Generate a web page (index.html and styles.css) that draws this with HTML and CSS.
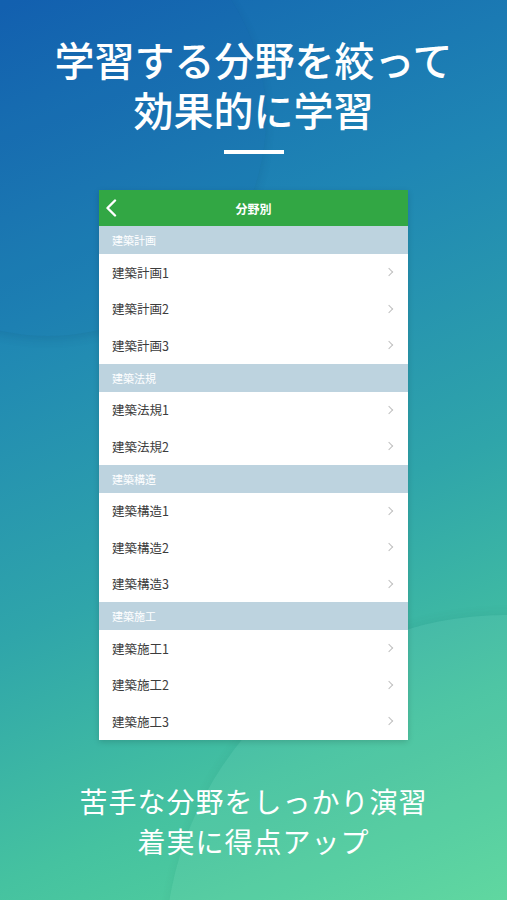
FILE: index.html
```html
<!DOCTYPE html>
<html lang="ja">
<head>
  <meta charset="utf-8">
  <title>分野別</title>
  <link rel="stylesheet" href="styles.css">
</head>
<body>
  <div class="screen">
    <div class="bubble bubble-top"></div>
    <div class="bubble bubble-bottom"></div>

    <h1 class="headline">学習する分野を絞って<br>効果的に学習</h1>
    <div class="rule"></div>

    <div class="phone">
      <div class="navbar">
        <svg class="back" width="12" height="18" viewBox="0 0 12 18">
          <path d="M10 1.5 L2.5 9 L10 16.5" fill="none" stroke="#fff" stroke-width="2.4" stroke-linecap="round" stroke-linejoin="round"/>
        </svg>
        <span class="nav-title">分野別</span>
      </div>

      <div class="section">建築計画</div>
      <div class="row"><span>建築計画1</span><i class="chev"></i></div>
      <div class="row"><span>建築計画2</span><i class="chev"></i></div>
      <div class="row"><span>建築計画3</span><i class="chev"></i></div>

      <div class="section">建築法規</div>
      <div class="row"><span>建築法規1</span><i class="chev"></i></div>
      <div class="row"><span>建築法規2</span><i class="chev"></i></div>

      <div class="section">建築構造</div>
      <div class="row"><span>建築構造1</span><i class="chev"></i></div>
      <div class="row"><span>建築構造2</span><i class="chev"></i></div>
      <div class="row"><span>建築構造3</span><i class="chev"></i></div>

      <div class="section">建築施工</div>
      <div class="row"><span>建築施工1</span><i class="chev"></i></div>
      <div class="row"><span>建築施工2</span><i class="chev"></i></div>
      <div class="row"><span>建築施工3</span><i class="chev"></i></div>
    </div>

    <p class="caption">苦手な分野をしっかり演習<br>着実に得点アップ</p>
  </div>
</body>
</html>
```

FILE: styles.css
```css
html, body {
  margin: 0;
  padding: 0;
}

body {
  font-family: "Noto Sans CJK JP", "Noto Sans", sans-serif;
}

.screen {
  position: relative;
  width: 507px;
  height: 900px;
  overflow: hidden;
  background: linear-gradient(158deg, #1363b1 0%, #1f86b4 30%, #2fa5aa 58%, #45c2a0 80%, #58d59b 100%);
  display: flex;
  flex-direction: column;
  align-items: center;
}

/* soft decorative circles behind everything */
.bubble {
  position: absolute;
  border-radius: 50%;
}

.bubble-top {
  left: -170px;
  top: -100px;
  width: 436px;
  height: 436px;
  background: rgba(10, 60, 150, 0.07);
  box-shadow: 0 4px 10px rgba(0, 40, 90, 0.12);
}

.bubble-bottom {
  left: 165px;
  top: 615px;
  width: 680px;
  height: 680px;
  background: rgba(255, 255, 255, 0.05);
  box-shadow: 0 -3px 10px rgba(0, 60, 60, 0.06);
}

.headline {
  position: relative;
  margin: 34px 0 0;
  color: #fff;
  font-size: 40px;
  line-height: 50px;
  font-weight: 500;
  text-align: center;
  letter-spacing: 0;
}

.rule {
  position: relative;
  width: 60px;
  height: 4px;
  margin-top: 16px;
  background: #fff;
}

.phone {
  position: relative;
  width: 309px;
  margin-top: 36px;
  background: #fff;
  box-shadow: 0 2px 6px rgba(0, 0, 0, 0.15);
}

.navbar {
  height: 36px;
  background: #32a744;
  display: flex;
  align-items: center;
  justify-content: center;
  position: relative;
}

.back {
  position: absolute;
  left: 6px;
  top: 9px;
}

.nav-title {
  color: #fff;
  font-size: 12px;
  font-weight: 700;
}

.section {
  height: 28px;
  line-height: 28px;
  padding-left: 13px;
  background: #bdd3df;
  color: #fff;
  font-size: 11px;
}

.row {
  height: 36.5px;
  display: flex;
  align-items: center;
  justify-content: space-between;
  padding: 0 16px 0 13px;
  color: #3c3c3c;
  font-size: 12.5px;
}

.chev {
  width: 5px;
  height: 5px;
  border-top: 1.3px solid #c0c0c0;
  border-right: 1.3px solid #c0c0c0;
  transform: rotate(45deg);
}

.caption {
  position: relative;
  margin: 41px 0 0;
  color: #fff;
  font-size: 28px;
  line-height: 40px;
  text-align: center;
  letter-spacing: 1px;
}
```
